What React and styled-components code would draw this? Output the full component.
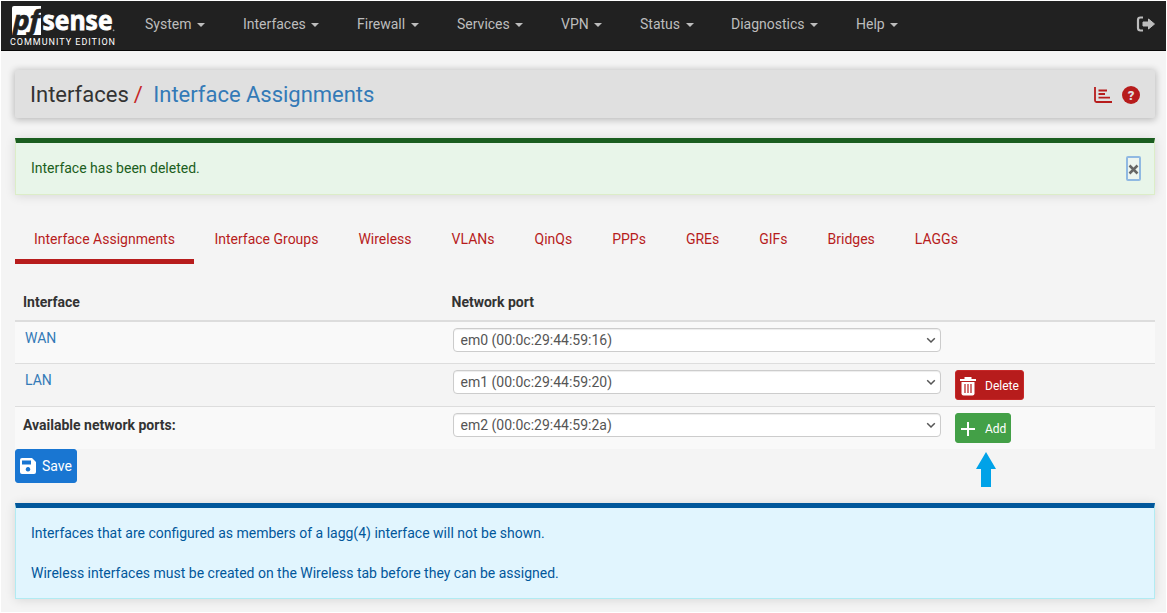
import React from "react";
import styled, { createGlobalStyle } from "styled-components";

const GlobalStyle = createGlobalStyle`
  * {
    box-sizing: border-box;
  }
  html {
    background: white;
  }
  body {
    margin: 0;
    font-family: Roboto, "Liberation Sans", sans-serif;
    font-size: 14px;
    line-height: 20px;
    color: #333;
  }
  a {
    text-decoration: none;
  }
`;

const Page = styled.div`
  height: 613px;
  padding: 1px;
  overflow: hidden;
  background: #f4f4f4;
  background-clip: content-box;
`;

const Navbar = styled.nav`
  height: 50px;
  display: flex;
  align-items: center;
  background: #212121;
  border-bottom: 1px solid #080808;
`;

const Logo = styled.svg`
  display: block;
  width: 112px;
  height: 49px;
  margin-left: 4px;
  overflow: visible;
`;

const Menu = styled.ul`
  display: flex;
  flex: 1;
  list-style: none;
  margin: 0;
  padding: 0 0 4px 8px;
`;

const MenuItem = styled.li`
  width: ${(p) => p.width}px;
  padding-left: 20px;
  display: flex;
  align-items: center;
  color: #bdbdbd;
`;

const Caret = styled.span`
  margin-left: 5.5px;
  margin-top: 2px;
  border-top: 4px solid;
  border-left: 4px solid transparent;
  border-right: 4px solid transparent;
`;

const Logout = styled.svg`
  width: 20px;
  height: 18px;
  margin: 0 10px 4px 0;
`;

const Container = styled.main`
  padding: 19px 11px 0 14px;
`;

const PageHeader = styled.header`
  height: 48px;
  display: flex;
  align-items: center;
  justify-content: space-between;
  padding: 2px 15px 0;
  background: #e0e0e0;
  border-radius: 2px;
  box-shadow: 0 1px 7px 1px rgba(0, 0, 0, 0.24);
`;

const Breadcrumb = styled.h1`
  margin: 0;
  font-size: 22px;
  font-weight: 400;
  line-height: 30px;
  color: #333;
`;

const Slash = styled.span`
  color: #c62828;
  margin: 0 10.5px 0 5px;
`;

const Link = styled.a`
  color: #337ab7;
`;

const PageLink = styled(Link)`
  letter-spacing: -0.02px;
`;

const HeaderIcons = styled.div`
  display: flex;
  align-items: center;
  gap: 10px;
`;

const Alert = styled.section`
  margin-top: ${(p) => p.top}px;
  height: ${(p) => p.height}px;
  padding: 15px;
  color: ${(p) => p.color};
  background: ${(p) => p.background};
  border: 1px solid ${(p) => p.edge};
  border-top: 5px solid ${(p) => p.bar};
  box-shadow: 0 1px 10px rgba(0, 0, 0, 0.12);
  p {
    margin: 0 0 20px;
  }
`;

const AlertRow = styled.div`
  display: flex;
  justify-content: space-between;
  align-items: flex-start;
`;

const CloseButton = styled.button`
  display: flex;
  align-items: center;
  justify-content: center;
  width: 15px;
  height: 25px;
  margin: -2px -2px 0 0;
  padding: 1px 0 0;
  border: 2px solid #90b9e2;
  border-radius: 2px;
  background: #edf5ef;
`;

const Tabs = styled.ul`
  display: flex;
  list-style: none;
  margin: 19px 0 0;
  padding: 0;
`;

const Tab = styled.li`
  height: 50px;
  padding: 15px 20px 0;
  color: #b71c1c;
  border-bottom: 5px solid transparent;
`;

const ActiveTab = styled(Tab)`
  width: 179px;
  margin-right: 0.4px;
  padding: 15px 0 0 19px;
  white-space: nowrap;
  border-bottom-color: #b71c1c;
`;

const Table = styled.div`
  margin-top: 18px;
`;

const Row = styled.div`
  display: grid;
  grid-template-columns: 430px 502px 1fr;
  height: ${(p) => p.height}px;
  background: ${(p) => (p.isStriped ? "#f9f9f9" : "transparent")};
  border-bottom: ${(p) => p.line || 0}px solid #ddd;
`;

const Cell = styled.div`
  padding: ${(p) => p.top || 6}px 8px 0 ${(p) => p.left || 8}px;
  font-weight: ${(p) => (p.isBold ? 700 : 400)};
`;

const Select = styled.div`
  display: flex;
  align-items: center;
  justify-content: space-between;
  width: 488px;
  height: 24px;
  padding: 0 4px 0 6.5px;
  color: #555;
  background: white;
  border: 1px solid #ccc;
  border-radius: 4px;
  box-shadow: inset 0 1px 1px rgba(0, 0, 0, 0.075);
`;

const Button = styled.button`
  display: flex;
  align-items: center;
  width: ${(p) => p.width}px;
  height: ${(p) => p.height || 30}px;
  padding: ${(p) => p.top || 0}px 0 0 4px;
  gap: ${(p) => p.gap || 9}px;
  color: white;
  background: ${(p) => p.background};
  border: 1px solid ${(p) => p.edge || p.background};
  border-radius: 3px;
  font-family: inherit;
  font-size: ${(p) => p.size || 12}px;
`;

const Pointer = styled.svg`
  position: absolute;
  left: 976px;
  top: 452px;
`;

const menu = [
  ["System", 98],
  ["Interfaces", 114],
  ["Firewall", 100],
  ["Services", 104],
  ["VPN", 79],
  ["Status", 91],
  ["Diagnostics", 125],
  ["Help", 80],
];

const tabs = [
  "Interface Groups",
  "Wireless",
  "VLANs",
  "QinQs",
  "PPPs",
  "GREs",
  "GIFs",
  "Bridges",
  "LAGGs",
];

const PfSenseLogo = () => (
  <Logo viewBox="5 1 112 49">
    <path d="M14 6h27v29H12V8q0-2 2-2z" fill="white" />
    <text
      x="13"
      y="29.5"
      fontFamily="Open Sans"
      fontSize="26"
      fontWeight="700"
      fontStyle="italic"
      fill="#212121"
      stroke="#212121"
      strokeWidth="0.7"
      textLength="27"
      lengthAdjust="spacingAndGlyphs"
    >
      pf
    </text>
    <text
      x="42.5"
      y="29.8"
      fontFamily="Open Sans"
      fontSize="26"
      fontWeight="700"
      fill="white"
      stroke="white"
      strokeWidth="0.8"
      textLength="70"
      lengthAdjust="spacingAndGlyphs"
    >
      sense
    </text>
    <circle cx="113.6" cy="30.3" r="0.9" fill="#999" />
    <text x="10" y="45" fontSize="9" fill="white" textLength="105">
      COMMUNITY EDITION
    </text>
  </Logo>
);

const PortSelect = ({ children }) => (
  <Select>
    {children}
    <svg width="10" height="8" viewBox="0 0 10 8" fill="none">
      <path d="M1.2 2.2 5 6l3.8-3.8" stroke="#555" strokeWidth="1.5" />
    </svg>
  </Select>
);

const TrashIcon = () => (
  <svg width="16" height="19" viewBox="0 0 16 19">
    <path d="M0 3h16M5.5 2.2V1h5v1.2" stroke="white" strokeWidth="2" fill="none" />
    <path d="M1.5 5h13v11.5q0 2-2 2h-9q-2 0-2-2z" fill="white" />
    <path d="M5 7v9M8 7v9M11 7v9" stroke="#b71c1c" strokeWidth="1.2" />
  </svg>
);

const PlusIcon = () => (
  <svg width="16" height="17" viewBox="0 0 16 17">
    <path d="M8 1v14M1 8h14" stroke="white" strokeWidth="2" />
  </svg>
);

const SaveIcon = () => (
  <svg width="16" height="16" viewBox="0 0 16 16">
    <path
      fill="white"
      fillRule="evenodd"
      d="M2 0h10l4 4v10q0 2-2 2H2q-2 0-2-2V2q0-2 2-2zM2 2.5v4h9v-4zM8 9a2.3 2.3 0 1 0 .01 0z"
    />
  </svg>
);

const App = () => {
  return (
    <Page>
      <GlobalStyle />
      <Navbar>
        <PfSenseLogo />
        <Menu>
          {menu.map(([label, width]) => (
            <MenuItem key={label} width={width}>
              {label}
              <Caret />
            </MenuItem>
          ))}
        </Menu>
        <Logout viewBox="0 0 20 18">
          <path
            d="M7 2.5H4.5Q2 2.5 2 5v8q0 2.5 2.5 2.5H7"
            stroke="#bdbdbd"
            strokeWidth="2.2"
            fill="none"
          />
          <path
            d="M7 7h5.5V4l6 5-6 5v-3H7z"
            fill="#bdbdbd"
            stroke="#bdbdbd"
            strokeLinejoin="round"
          />
        </Logout>
      </Navbar>
      <Container>
        <PageHeader>
          <Breadcrumb>
            Interfaces<Slash>/</Slash>
            <PageLink>Interface Assignments</PageLink>
          </Breadcrumb>
          <HeaderIcons>
            <svg width="18" height="16" viewBox="0 0 18 16">
              <path
                d="M1 0v13.5q0 1.500 1.500 1.500H18M4.500 3.500h8.500M4.500 7h6.500M4.500 10.700h11.500"
                stroke="#b71c1c"
                strokeWidth="1.8"
                fill="none"
              />
            </svg>
            <svg width="18" height="18" viewBox="0 0 18 18">
              <circle cx="9" cy="9" r="9" fill="#b71c1c" />
              <text
                x="9"
                y="13.5"
                fontSize="13"
                fontWeight="900"
                textAnchor="middle"
                fill="#e0e0e0"
              >
                ?
              </text>
            </svg>
          </HeaderIcons>
        </PageHeader>
        <Alert
          top={20}
          height={57}
          color="#1b5e20"
          background="#e8f5e9"
          edge="#dcedc8"
          bar="#1b5e20"
        >
          <AlertRow>
            <span>Interface has been deleted.</span>
            <CloseButton>
              <svg width="11" height="11" viewBox="0 0 11 11">
                <path
                  d="m1.5 1.5 8 8M9.5 1.5l-8 8"
                  stroke="#666"
                  strokeWidth="2.5"
                />
              </svg>
            </CloseButton>
          </AlertRow>
        </Alert>
        <Tabs>
          <ActiveTab>Interface Assignments</ActiveTab>
          {tabs.map((tab) => (
            <Tab key={tab}>{tab}</Tab>
          ))}
        </Tabs>
        <Table>
          <Row height={40} line={2}>
            <Cell isBold top={10}>
              Interface
            </Cell>
            <Cell isBold top={10} left={6.5}>
              Network port
            </Cell>
          </Row>
          <Row height={42} line={1} isStriped>
            <Cell left={10}>
              <Link>WAN</Link>
            </Cell>
            <Cell>
              <PortSelect>em0 (00:0c:29:44:59:16)</PortSelect>
            </Cell>
          </Row>
          <Row height={43} line={1}>
            <Cell left={10}>
              <Link>LAN</Link>
            </Cell>
            <Cell>
              <PortSelect>em1 (00:0c:29:44:59:20)</PortSelect>
            </Cell>
            <Cell>
              <Button width={69} top={2} background="#b71c1c" edge="#c62828">
                <TrashIcon />
                Delete
              </Button>
            </Cell>
          </Row>
          <Row height={42} isStriped>
            <Cell isBold top={8}>
              Available network ports:
            </Cell>
            <Cell>
              <PortSelect>em2 (00:0c:29:44:59:2a)</PortSelect>
            </Cell>
            <Cell>
              <Button width={56} top={2} background="#43a047">
                <PlusIcon />
                Add
              </Button>
            </Cell>
          </Row>
        </Table>
        <Button width={62} height={34} size={14} gap={6} background="#1976d2">
          <SaveIcon />
          Save
        </Button>
        <Alert
          top={20}
          height={96}
          color="#01579b"
          background="#e1f5fe"
          edge="#b2ebf2"
          bar="#01579b"
        >
          <p>
            Interfaces that are configured as members of a lagg(4) interface
            will not be shown.
          </p>
          <p>
            Wireless interfaces must be created on the Wireless tab before they
            can be assigned.
          </p>
        </Alert>
      </Container>
      <Pointer width="20" height="35" viewBox="0 0 20 35">
        <path d="M10 0 20 17h-5v18H5V17H0z" fill="#00a2e8" />
      </Pointer>
    </Page>
  );
};

export default App;
